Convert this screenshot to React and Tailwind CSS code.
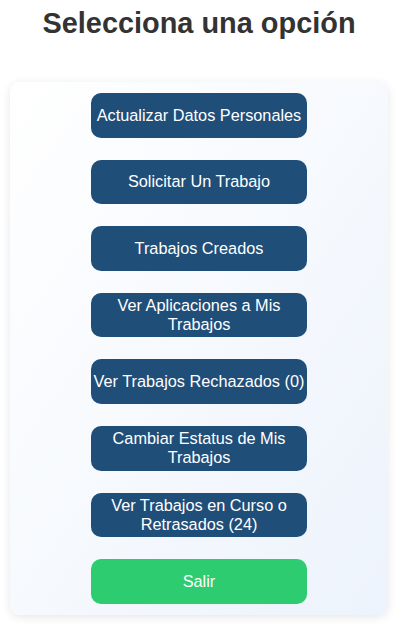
export default function App() {
  const items = [
    "Actualizar Datos Personales",
    "Solicitar Un Trabajo",
    "Trabajos Creados",
    "Ver Aplicaciones a Mis Trabajos",
    "Ver Trabajos Rechazados (0)",
    "Cambiar Estatus de Mis Trabajos",
    "Ver Trabajos en Curso o Retrasados (24)",
  ];
  return (
    <div className="min-h-[625px] bg-white pt-[7px]" style={{ fontFamily: '"Liberation Sans", Arial, sans-serif' }}>
      <h1 className="pr-[2px] text-center text-[28.9px] font-bold text-[#333333] leading-[32px]">Selecciona una opción</h1>
      <div className="ml-[10px] mt-[43px] w-[378px] rounded-[10px] bg-gradient-to-br from-white to-[#edf3fc] py-[11px] shadow-[0_2px_10px_rgba(0,0,0,0.1)] flex flex-col items-center gap-[22px]">
        {items.map((t) => (
          <button key={t} className="h-[44.6px] w-[216px] rounded-[10px] bg-[#1f4e79] text-white text-[16.3px] leading-[19px] flex items-center justify-center text-center px-[2px]">
            {t}
          </button>
        ))}
        <button className="h-[44.6px] w-[216px] rounded-[10px] bg-[#2ecc71] text-white text-[16.3px] flex items-center justify-center">
          Salir
        </button>
      </div>
    </div>
  );
}
